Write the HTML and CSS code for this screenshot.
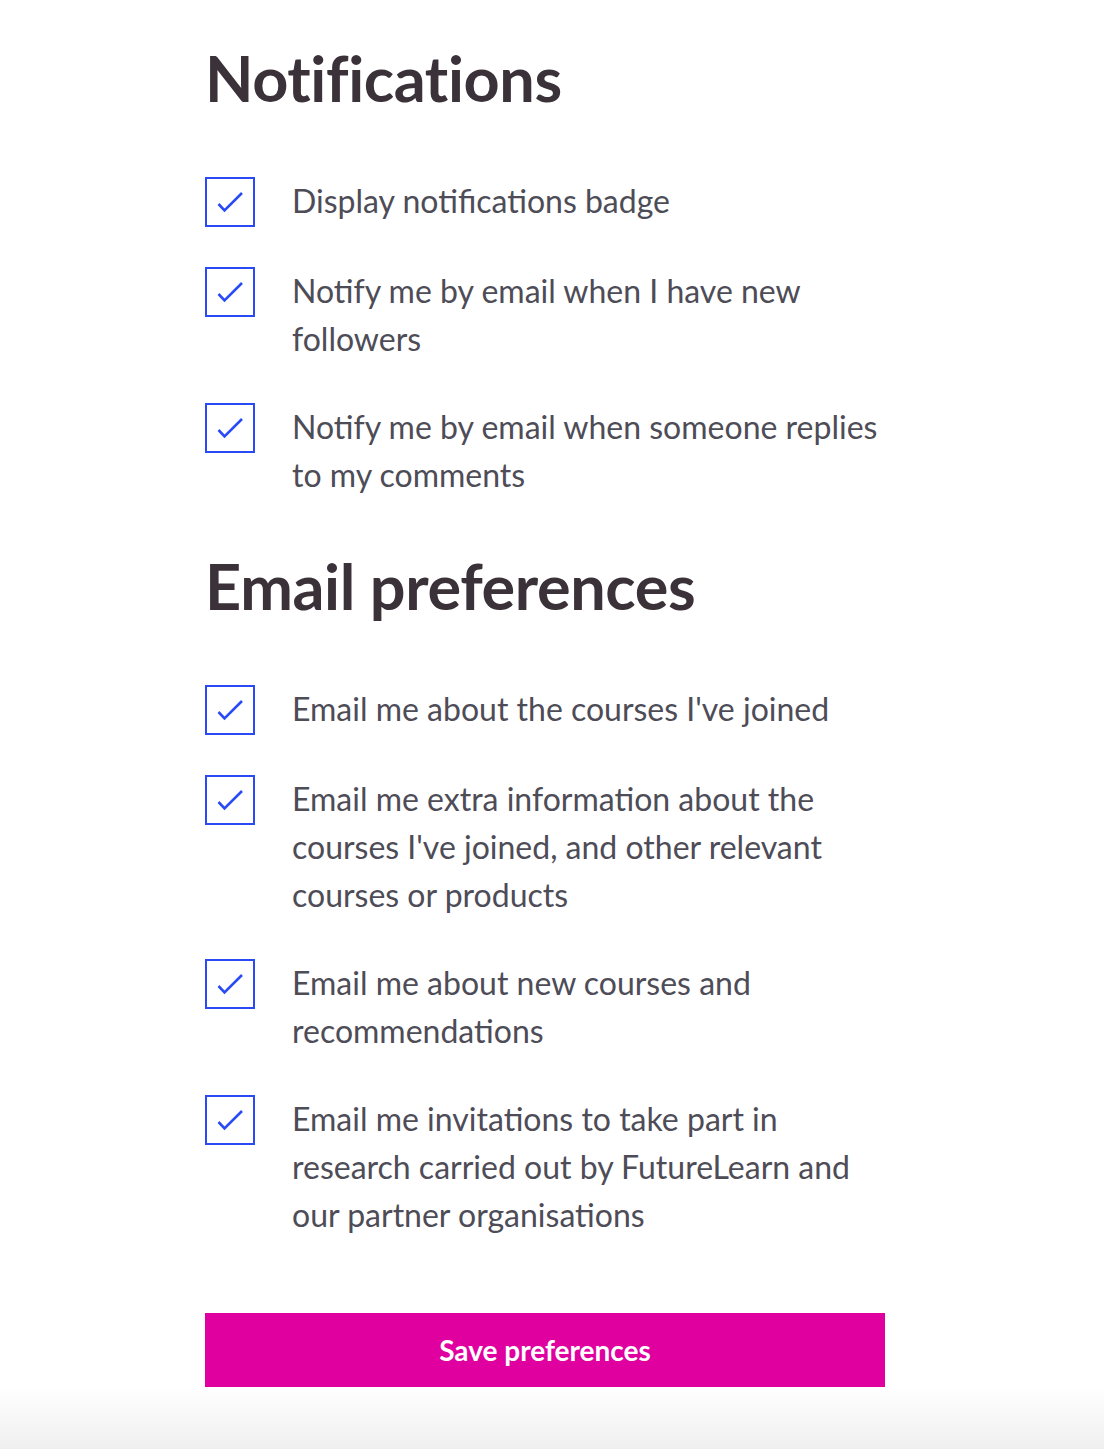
FILE: index.html
```html
<!DOCTYPE html>
<html lang="en">
<head>
<meta charset="utf-8">
<title>Notifications</title>
<link rel="stylesheet" href="styles.css">
</head>
<body>
<main class="prefs">
  <form class="prefs-form">
    <section class="group">
      <h2 class="group-title">Notifications</h2>
      <label class="option">
        <span class="box"><svg viewBox="0 0 46 46"><path d="M11.5 25 L17.5 31.3 L35 14"/></svg></span>
        <span class="option-text">Display notifications badge</span>
      </label>
      <label class="option">
        <span class="box"><svg viewBox="0 0 46 46"><path d="M11.5 25 L17.5 31.3 L35 14"/></svg></span>
        <span class="option-text">Notify me by email when I have new followers</span>
      </label>
      <label class="option">
        <span class="box"><svg viewBox="0 0 46 46"><path d="M11.5 25 L17.5 31.3 L35 14"/></svg></span>
        <span class="option-text">Notify me by email when someone replies to my comments</span>
      </label>
    </section>
    <section class="group">
      <h2 class="group-title">Email preferences</h2>
      <label class="option">
        <span class="box"><svg viewBox="0 0 46 46"><path d="M11.5 25 L17.5 31.3 L35 14"/></svg></span>
        <span class="option-text">Email me about the courses I've joined</span>
      </label>
      <label class="option">
        <span class="box"><svg viewBox="0 0 46 46"><path d="M11.5 25 L17.5 31.3 L35 14"/></svg></span>
        <span class="option-text">Email me extra information about the courses I've joined, and other relevant courses or products</span>
      </label>
      <label class="option">
        <span class="box"><svg viewBox="0 0 46 46"><path d="M11.5 25 L17.5 31.3 L35 14"/></svg></span>
        <span class="option-text">Email me about new courses and recommendations</span>
      </label>
      <label class="option">
        <span class="box"><svg viewBox="0 0 46 46"><path d="M11.5 25 L17.5 31.3 L35 14"/></svg></span>
        <span class="option-text">Email me invitations to take part in research carried out by FutureLearn and our partner organisations</span>
      </label>
    </section>
    <button class="save" type="button">Save preferences</button>
  </form>
</main>
<div class="fade"></div>
</body>
</html>
```

FILE: styles.css
```css
html, body {
  margin: 0;
  padding: 0;
  background: #fff;
}

body {
  font-family: Lato, "Open Sans", sans-serif;
  color: #4d4c57;
}

.prefs {
  width: 680px;
  margin-left: 205px;
  padding-top: 32px;
}

.prefs-form {
  display: flex;
  flex-direction: column;
}

.group {
  display: flex;
  flex-direction: column;
}

.group:nth-child(2) .group-title {
  margin-top: 1px;
}

.group-title {
  margin: 0 0 53px;
  font-size: 63px;
  line-height: 92px;
  font-weight: 700;
  color: #3a3238;
  letter-spacing: -0.4px;
}

.option {
  display: flex;
  align-items: flex-start;
  gap: 37px;
  margin-bottom: 40px;
}

.box {
  flex: none;
  width: 46px;
  height: 46px;
  border: 2px solid #2a4af5;
  display: flex;
}

.box svg {
  width: 46px;
  height: 46px;
}

.box path {
  fill: none;
  stroke: #2a4af5;
  stroke-width: 2.6;
  stroke-linecap: butt;
  stroke-linejoin: miter;
}

.option-text {
  font-size: 32px;
  line-height: 48px;
}

.save {
  margin-top: 34px;
  height: 74px;
  border: 0;
  background: #e000a0;
  color: #fff;
  font-family: Lato, sans-serif;
  font-size: 28px;
  font-weight: 700;
}

.fade {
  height: 62px;
  background: linear-gradient(#fff, #efefef);
}
```
